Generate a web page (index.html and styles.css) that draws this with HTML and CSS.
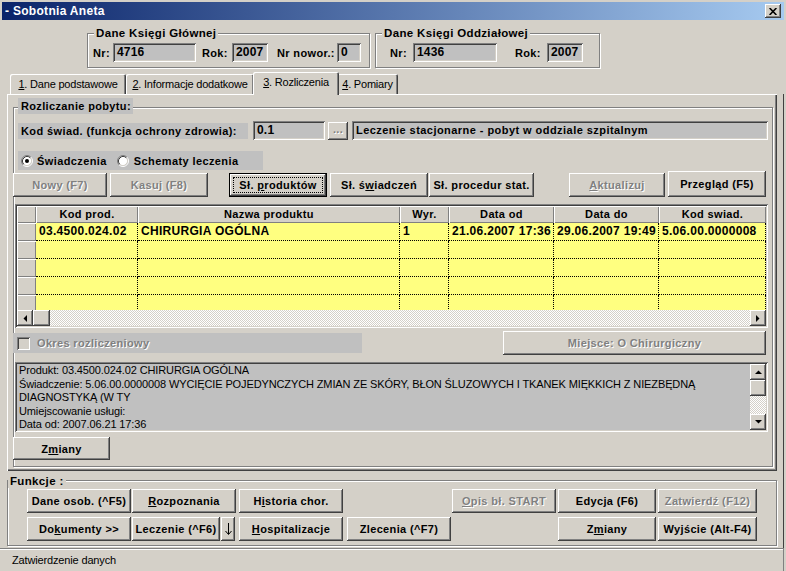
FILE: index.html
```html
<!DOCTYPE html>
<html lang="pl">
<head>
<meta charset="utf-8">
<title>Sobotnia Aneta</title>
<link rel="stylesheet" href="styles.css">
</head>
<body>
<div class="window">
  <div class="titlebar">
    <span class="title">- Sobotnia Aneta</span>
    <span class="close raised"><svg width="8" height="7" viewBox="0 0 8 7"><path d="M0.6 0 L7.4 7 M7.4 0 L0.6 7" stroke="#000" stroke-width="1.6" fill="none"/></svg></span>
  </div>

  <div class="header">
    <div class="group g-main">
      <div class="legend">Dane Księgi Głównej</div>
      <div class="frow">
        <span class="lbl l-nr1">Nr:</span>
        <span class="field sunken f-nr1">4716</span>
        <span class="lbl l-rok1">Rok:</span>
        <span class="field sunken f-rok1">2007</span>
        <span class="lbl l-nn">Nr nowor.:</span>
        <span class="field sunken f-nn">0</span>
      </div>
    </div>
    <div class="group g-odd">
      <div class="legend">Dane Księgi Oddziałowej</div>
      <div class="frow">
        <span class="lbl l-nr2">Nr:</span>
        <span class="field sunken f-nr2">1436</span>
        <span class="lbl l-rok2">Rok:</span>
        <span class="field sunken f-rok2">2007</span>
      </div>
    </div>
  </div>

  <div class="tabs">
    <div class="tab t1"><span><u>1</u>. Dane podstawowe</span></div>
    <div class="tab t2"><span><u>2</u>. Informacje dodatkowe</span></div>
    <div class="tab t3 sel"><span><u>3</u>. Rozliczenia</span></div>
    <div class="tab t4"><span><u>4</u>. Pomiary</span></div>
  </div>

  <div class="main">
    <div class="panel">
      <div class="group roz">
        <div class="roz-legend">Rozliczanie pobytu:</div>

        <div class="kod-row">
          <span class="kod-lbl">Kod świad. (funkcja ochrony zdrowia):</span>
          <span class="field sunken f-kod">0.1</span>
          <span class="btn raised dis btn-dots"><span>...</span></span>
          <span class="field sunken f-opis">Leczenie stacjonarne - pobyt w oddziale szpitalnym</span>
        </div>

        <div class="radio-row">
          <svg class="radio" width="12" height="12" viewBox="0 0 12 12">
            <circle cx="6" cy="6" r="4.5" fill="#fff"/>
            <path d="M2.11 9.89A5.5 5.5 0 0 1 9.89 2.11" stroke="#808080" fill="none"/>
            <path d="M9.89 2.11A5.5 5.5 0 0 1 2.11 9.89" stroke="#fff" fill="none"/>
            <path d="M2.82 9.18A4.5 4.5 0 0 1 9.18 2.82" stroke="#404040" fill="none"/>
            <path d="M9.18 2.82A4.5 4.5 0 0 1 2.82 9.18" stroke="#d4d0c8" fill="none"/>
            <circle cx="6" cy="6" r="2" fill="#000"/>
          </svg>
          <span class="r-lbl1">Świadczenia</span>
          <svg class="radio r2" width="12" height="12" viewBox="0 0 12 12">
            <circle cx="6" cy="6" r="4.5" fill="#fff"/>
            <path d="M2.11 9.89A5.5 5.5 0 0 1 9.89 2.11" stroke="#808080" fill="none"/>
            <path d="M9.89 2.11A5.5 5.5 0 0 1 2.11 9.89" stroke="#fff" fill="none"/>
            <path d="M2.82 9.18A4.5 4.5 0 0 1 9.18 2.82" stroke="#404040" fill="none"/>
            <path d="M9.18 2.82A4.5 4.5 0 0 1 2.82 9.18" stroke="#d4d0c8" fill="none"/>
          </svg>
          <span class="r-lbl2">Schematy leczenia</span>
        </div>

        <div class="btn-row">
          <span class="btn raised dis b-nowy"><span>Nowy (F7)</span></span>
          <span class="btn raised dis b-kasuj"><span>Kasuj (F8)</span></span>
          <span class="btn focus b-prod"><span>Sł. <u>p</u>roduktów</span></span>
          <span class="btn raised b-swiad"><span>Sł. ś<u>w</u>iadczeń</span></span>
          <span class="btn raised b-proc"><span>Sł. procedur stat.</span></span>
          <span class="btn raised dis b-akt"><span><u>A</u>ktualizuj</span></span>
          <span class="btn raised b-prz"><span>Przegląd (F5)</span></span>
        </div>

        <div class="grid sunken">
          <div class="cells">
            <div class="hc"></div>
            <div class="hc">Kod prod.</div>
            <div class="hc">Nazwa produktu</div>
            <div class="hc">Wyr.</div>
            <div class="hc">Data od</div>
            <div class="hc">Data do</div>
            <div class="hc">Kod swiad.</div>

            <div class="ic"></div>
            <div class="dc">03.4500.024.02</div>
            <div class="dc">CHIRURGIA OGÓLNA</div>
            <div class="dc">1</div>
            <div class="dc">21.06.2007 17:36</div>
            <div class="dc">29.06.2007 19:49</div>
            <div class="dc">5.06.00.0000008</div>

            <div class="ic"></div><div class="dc"></div><div class="dc"></div><div class="dc"></div><div class="dc"></div><div class="dc"></div><div class="dc"></div>
            <div class="ic"></div><div class="dc"></div><div class="dc"></div><div class="dc"></div><div class="dc"></div><div class="dc"></div><div class="dc"></div>
            <div class="ic"></div><div class="dc"></div><div class="dc"></div><div class="dc"></div><div class="dc"></div><div class="dc"></div><div class="dc"></div>
            <div class="ic"></div><div class="dc"></div><div class="dc"></div><div class="dc"></div><div class="dc"></div><div class="dc"></div><div class="dc"></div>
          </div>
          <div class="hscroll">
            <span class="sb-btn raised"><svg width="4" height="7" viewBox="0 0 4 7"><path d="M4 0 L0.5 3.5 L4 7 Z" fill="#000"/></svg></span>
            <span class="sb-thumb-h raised"></span>
            <span class="sb-track"></span>
            <span class="sb-btn raised"><svg width="4" height="7" viewBox="0 0 4 7"><path d="M0 0 L3.5 3.5 L0 7 Z" fill="#000"/></svg></span>
          </div>
        </div>

        <div class="okres-row">
          <div class="chk-panel">
            <span class="chk sunken"></span>
            <span class="chk-lbl dis">Okres rozliczeniowy</span>
          </div>
          <span class="btn raised dis b-miejsce"><span>Miejsce: O Chirurgiczny</span></span>
        </div>

        <div class="memo sunken">
          <div class="memo-text">
            <div>Produkt: 03.4500.024.02 CHIRURGIA OGÓLNA</div>
            <div>Świadczenie: 5.06.00.0000008 WYCIĘCIE POJEDYNCZYCH ZMIAN ZE SKÓRY, BŁON ŚLUZOWYCH I TKANEK MIĘKKICH Z NIEZBĘDNĄ</div>
            <div>DIAGNOSTYKĄ (W TY</div>
            <div>Umiejscowanie usługi:</div>
            <div>Data od: 2007.06.21 17:36</div>
          </div>
          <div class="vscroll">
            <span class="sb-btn raised"><svg width="7" height="4" viewBox="0 0 7 4"><path d="M0 4 L3.5 0.5 L7 4 Z" fill="#000"/></svg></span>
            <span class="sb-thumb-v raised"></span>
            <span class="sb-track"></span>
            <span class="sb-btn raised"><svg width="7" height="4" viewBox="0 0 7 4"><path d="M0 0 L3.5 3.5 L7 0 Z" fill="#000"/></svg></span>
          </div>
        </div>

        <span class="btn raised b-zmiany1"><span>Z<u>m</u>iany</span></span>
      </div>
    </div>

    <div class="group fun">
      <div class="fun-legend">Funkcje :</div>
      <div class="fun-row r1">
        <span class="btn raised fb-104"><span>Dane osob. (^F5)</span></span>
        <span class="btn raised fb-104 ml1"><span><u>R</u>ozpoznania</span></span>
        <span class="btn raised fb-104 ml3"><span>H<u>i</u>storia chor.</span></span>
        <span class="btn raised dis fb-104 ml-opis"><span><u>O</u>pis bł. START</span></span>
        <span class="btn raised fb-98 ml2"><span>Edycja (F6)</span></span>
        <span class="btn raised dis fb-99 ml2"><span>Zatwierdź (F12)</span></span>
      </div>
      <div class="fun-row r2">
        <span class="btn raised fb-104"><span>Do<u>k</u>umenty &gt;&gt;</span></span>
        <span class="btn raised fb-88 ml1"><span>Leczenie (^F6)</span></span>
        <span class="btn raised fb-14 ml1"><svg width="7" height="12" viewBox="0 0 7 12"><path d="M3.5 0 V11 M0.5 8 L3.5 11.5 L6.5 8" stroke="#000" stroke-width="1" fill="none"/></svg></span>
        <span class="btn raised fb-104 ml4"><span><u>H</u>ospitalizacje</span></span>
        <span class="btn raised fb-104 ml4"><span>Zlecenia (^F7)</span></span>
        <span class="btn raised fb-98 ml-zm"><span>Z<u>m</u>iany</span></span>
        <span class="btn raised fb-99 ml2"><span>Wyjście (Alt-F4)</span></span>
      </div>
    </div>
  </div>

  <div class="status">Zatwierdzenie danych</div>
</div>
</body>
</html>
```

FILE: styles.css
```css
* { box-sizing: border-box; }
html, body { margin: 0; padding: 0; }
body {
  background: #d4d0c8;
  font-family: "Liberation Sans", Arial, sans-serif;
  font-size: 11px;
  color: #000;
}
u { text-decoration: underline; text-underline-offset: 1px; }

.window {
  width: 786px;
  height: 571px;
  overflow: hidden;
  padding-top: 2px;
  background: #d4d0c8;
}

/* 3D helpers */
.raised {
  background: #d4d0c8;
  box-shadow: inset -1px -1px #404040, inset 1px 1px #fff, inset -2px -2px #808080, inset 2px 2px #d4d0c8;
}
.sunken {
  box-shadow: inset 1px 1px #808080, inset -1px -1px #fff, inset 2px 2px #404040, inset -2px -2px #d4d0c8;
}
.dis { color: #808080; text-shadow: 1px 1px 0 #fff; }

/* title bar */
.titlebar {
  height: 18px;
  margin: 0 2px;
  padding: 0 3px;
  display: flex;
  align-items: center;
  justify-content: space-between;
  background: linear-gradient(to right, #0a246a, #a6caf0);
}
.title { color: #fff; font-weight: bold; font-size: 12px; letter-spacing: 0.3px; }
.close {
  width: 16px;
  height: 14px;
  display: flex;
  align-items: center;
  justify-content: center;
}

/* group boxes */
.group {
  border: 1px solid #808080;
  box-shadow: inset 1px 1px #fff, 1px 1px #fff;
}
.legend {
  width: max-content;
  height: 13px;
  line-height: 13px;
  margin: -7px 0 0 6px;
  padding: 0 2px;
  background: #d4d0c8;
  font-weight: bold;
  font-size: 11.5px;
  letter-spacing: 0.35px;
}

.header {
  display: flex;
  gap: 5px;
  margin-top: 13px;
  padding-left: 87px;
}
.g-main { width: 283px; height: 35px; }
.g-odd { width: 225px; height: 35px; }
.frow {
  display: flex;
  align-items: center;
  height: 19px;
  margin-top: 3px;
}
.g-main .frow { padding-left: 5px; }
.g-odd .frow { padding-left: 14px; }
.lbl { font-weight: bold; letter-spacing: 0.35px; white-space: nowrap; }
.field {
  display: block;
  height: 19px;
  line-height: 19px;
  padding-left: 4px;
  background: #c0c0c0;
  font-weight: bold;
  font-size: 12px;
  letter-spacing: 0.2px;
  white-space: nowrap;
  overflow: hidden;
}
.l-nr1 { width: 20px; }
.f-nr1 { width: 83px; }
.l-rok1 { width: 30px; margin-left: 6px; }
.f-rok1 { width: 36px; }
.l-nn { width: 60px; margin-left: 9px; }
.f-nn { width: 24px; }
.l-nr2 { width: 23px; }
.f-nr2 { width: 84px; }
.l-rok2 { width: 32px; margin-left: 18px; }
.f-rok2 { width: 36px; }

/* tabs */
.tabs {
  display: flex;
  align-items: flex-end;
  height: 22px;
  margin: 4px 0 0 10px;
}
.tab {
  height: 20px;
  display: flex;
  align-items: center;
  justify-content: center;
  border-radius: 2px 2px 0 0;
  background: #d4d0c8;
  box-shadow: inset 1px 1px #fff, inset -1px 0 #404040, inset -2px 0 #808080;
  white-space: nowrap;
  letter-spacing: -0.2px;
}
.t1 { width: 116px; }
.t2 { width: 128px; }
.t3 { width: 86px; margin-left: -1px; }
.t4 { width: 61px; margin-left: -2px; }
.tab.sel {
  height: 23px;
  margin-bottom: -1px;
  padding-bottom: 3px;
  position: relative;
  z-index: 1;
}

/* main */
.main {
  width: 784px;
  border-right: 1px solid #404040;
  padding: 0 0 2px 7px;
}
.panel {
  width: 770px;
  height: 377px;
  padding: 13px 0 0 6px;
  box-shadow: inset 1px 1px #fff, inset -1px -1px #404040, inset -2px -2px #808080;
}
.roz { width: 760px; height: 360px; }
.roz-legend {
  width: 115px;
  height: 16px;
  line-height: 16px;
  margin: -10px 0 0 4px;
  padding-left: 3px;
  background: #c0c0c0;
  font-weight: bold;
  letter-spacing: 0.35px;
}

.kod-row {
  display: flex;
  align-items: center;
  height: 19px;
  margin: 7px 0 0 4px;
}
.kod-lbl {
  width: 230px;
  height: 16px;
  line-height: 16px;
  padding-left: 3px;
  background: #c0c0c0;
  font-weight: bold;
  letter-spacing: 0.4px;
  white-space: nowrap;
}
.f-kod { width: 72px; margin-left: 5px; }
.f-opis { width: 416px; margin-left: 4px; font-size: 11px; letter-spacing: 0.45px; }

.btn {
  height: 24px;
  display: flex;
  align-items: center;
  justify-content: center;
  font-weight: bold;
  letter-spacing: 0.35px;
  white-space: nowrap;
  flex-shrink: 0;
}
.btn-dots { width: 20px; height: 18px; margin-left: 3px; padding-bottom: 3px; }

.radio-row {
  display: flex;
  align-items: center;
  width: 245px;
  height: 19px;
  margin: 11px 0 0 4px;
  padding-left: 3px;
  background: #c0c0c0;
  font-weight: bold;
  letter-spacing: 0.4px;
}
.radio { flex-shrink: 0; }
.r-lbl1 { margin-left: 4px; }
.r2 { margin-left: 10px; }
.r-lbl2 { margin-left: 5px; }

.btn-row {
  display: flex;
  align-items: flex-end;
  height: 26px;
  margin: 1px 0 0 -1px;
}
.b-nowy { width: 94px; }
.b-kasuj { width: 98px; margin-left: 3px; }
.b-prod { width: 98px; margin-left: 21px; }
.b-swiad { width: 98px; margin-left: 3px; }
.b-proc { width: 105px; margin-left: 1px; }
.b-akt { width: 96px; margin-left: 35px; }
.b-prz { width: 98px; height: 26px; margin-left: 3px; }
.focus {
  background: #d4d0c8;
  box-shadow: inset 1px 1px #000, inset -1px -1px #000, inset -2px -2px #404040, inset 2px 2px #fff, inset -3px -3px #808080;
  outline: 1px dotted #000;
  outline-offset: -5px;
}

/* grid */
.grid {
  width: 753px;
  height: 124px;
  margin: 7px 0 0 1px;
  padding: 2px;
  background: #d4d0c8;
}
.cells {
  display: grid;
  grid-template-columns: 19px 102px 262px 49px 105px 105px 107px;
  grid-template-rows: 17px repeat(5, 18px);
  height: 104px;
  overflow: hidden;
}
.hc {
  background: #d4d0c8;
  box-shadow: inset 1px 1px #fff, inset -1px -1px #808080;
  font-weight: bold;
  letter-spacing: 0.35px;
  text-align: center;
  line-height: 17px;
  white-space: nowrap;
}
.ic {
  background: #d4d0c8;
  box-shadow: inset 1px 1px #fff, inset -1px -1px #808080;
}
.dc {
  background: #ffff80;
  border-right: 1px dotted #000;
  border-bottom: 1px dotted #000;
  padding-left: 3px;
  font-weight: bold;
  font-size: 12px;
  letter-spacing: 0.3px;
  line-height: 17px;
  white-space: nowrap;
  overflow: hidden;
}
.hscroll { display: flex; height: 16px; }
.sb-btn {
  width: 16px;
  height: 16px;
  display: flex;
  align-items: center;
  justify-content: center;
  flex-shrink: 0;
}
.sb-thumb-h { width: 17px; height: 16px; flex-shrink: 0; }
.sb-thumb-v { width: 16px; height: 16px; flex-shrink: 0; }
.sb-track {
  flex: 1;
  background: repeating-conic-gradient(#fff 0 25%, #d4d0c8 0 50%) 0 0 / 2px 2px;
}

.okres-row {
  display: flex;
  align-items: center;
  height: 24px;
  margin: 3px 0 0 -1px;
}
.chk-panel {
  display: flex;
  align-items: center;
  width: 349px;
  height: 20px;
  padding-left: 4px;
  background: #c0c0c0;
}
.chk { display: block; width: 13px; height: 13px; background: #d4d0c8; flex-shrink: 0; }
.chk-lbl { margin-left: 7px; font-weight: bold; letter-spacing: 0.35px; }
.b-miejsce { width: 263px; margin-left: 141px; }

.memo {
  display: flex;
  width: 753px;
  height: 70px;
  margin: 7px 0 0 1px;
  padding: 2px;
  background: #c0c0c0;
}
.memo-text {
  flex: 1;
  padding-left: 2px;
  line-height: 13.5px;
  letter-spacing: -0.12px;
  white-space: nowrap;
  overflow: hidden;
}
.vscroll { display: flex; flex-direction: column; width: 16px; }

.b-zmiany1 { width: 97px; height: 23px; margin: 5px 0 0 -1px; }

/* funkcje */
.fun { width: 770px; height: 66px; margin-top: 9px; }
.fun-legend {
  width: max-content;
  height: 13px;
  line-height: 13px;
  margin-top: -6px;
  padding: 0 2px;
  background: #d4d0c8;
  font-weight: bold;
  font-size: 11.5px;
  letter-spacing: 0.35px;
}
.fun-row { display: flex; margin-left: 19px; }
.fun-row.r1 { margin-top: 1px; }
.fun-row.r2 { margin-top: 4px; }
.fb-104 { width: 104px; }
.fb-98 { width: 98px; }
.fb-99 { width: 99px; }
.fb-88 { width: 88px; }
.fb-14 { width: 14px; }
.ml1 { margin-left: 1px; }
.ml2 { margin-left: 2px; }
.ml3 { margin-left: 3px; }
.ml4 { margin-left: 4px; }
.ml-opis { margin-left: 109px; }
.ml-zm { margin-left: 107px; }

/* status */
.status {
  width: 784px;
  height: 23px;
  border-top: 1px solid #808080;
  border-right: 1px solid #808080;
  box-shadow: inset 0 1px #fff;
  padding: 3px 0 0 12px;
  line-height: 17px;
  letter-spacing: -0.15px;
}
```
